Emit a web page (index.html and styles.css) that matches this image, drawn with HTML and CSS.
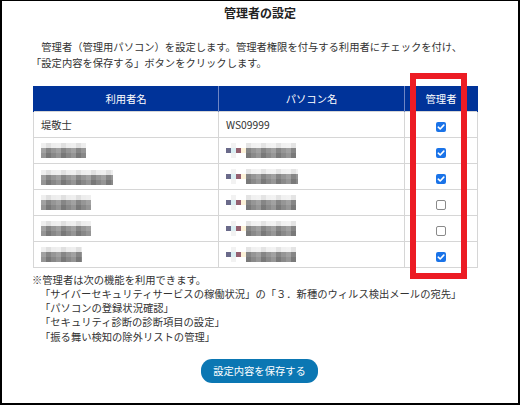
FILE: index.html
```html
<!DOCTYPE html>
<html lang="ja">
<head>
<meta charset="utf-8">
<link rel="stylesheet" href="styles.css">
</head>
<body>
<div class="frame">
  <h1 class="title">管理者の設定</h1>
  <p class="intro">　管理者（管理用パソコン）を設定します。管理者権限を付与する利用者にチェックを付け、<br>「設定内容を保存する」ボタンをクリックします。</p>
  <div class="table-wrap">
    <table class="users">
      <colgroup><col class="c1"><col class="c2"><col class="c3"></colgroup>
      <thead>
        <tr><th>利用者名</th><th>パソコン名</th><th>管理者</th></tr>
      </thead>
      <tbody>
        <tr><td>堤敬士</td><td>WS09999</td><td class="chk"><span class="cb on"><svg viewBox="0 0 10 10"><path d="M2.3 5.2 L4.2 7 L7.8 3.1" /></svg></span></td></tr>
        <tr><td><span class="mz n1"></span></td><td><span class="mz p1"></span></td><td class="chk"><span class="cb on"><svg viewBox="0 0 10 10"><path d="M2.3 5.2 L4.2 7 L7.8 3.1" /></svg></span></td></tr>
        <tr><td><span class="mz n2"></span></td><td><span class="mz p2"></span></td><td class="chk"><span class="cb on"><svg viewBox="0 0 10 10"><path d="M2.3 5.2 L4.2 7 L7.8 3.1" /></svg></span></td></tr>
        <tr><td><span class="mz n3"></span></td><td><span class="mz p3"></span></td><td class="chk"><span class="cb off"></span></td></tr>
        <tr><td><span class="mz n4"></span></td><td><span class="mz p4"></span></td><td class="chk"><span class="cb off"></span></td></tr>
        <tr><td><span class="mz n5"></span></td><td><span class="mz p5"></span></td><td class="chk"><span class="cb on"><svg viewBox="0 0 10 10"><path d="M2.3 5.2 L4.2 7 L7.8 3.1" /></svg></span></td></tr>
      </tbody>
    </table>
    <div class="highlight"></div>
  </div>
  <div class="notes">
    <div>※管理者は次の機能を利用できます。</div>
    <div class="ind">「サイバーセキュリティサービスの稼働状況」の「３．新種のウィルス検出メールの宛先」</div>
    <div class="ind">「パソコンの登録状況確認」</div>
    <div class="ind">「セキュリティ診断の診断項目の設定」</div>
    <div class="ind">「振る舞い検知の除外リストの管理」</div>
  </div>
  <div class="actions">
    <button class="save">設定内容を保存する</button>
  </div>
</div>
</body>
</html>
```
FILE: styles.css
```css
html, body {
  margin: 0;
  padding: 0;
  background: #fff;
}
body {
  font-family: "Noto Sans CJK JP", "Noto Sans", sans-serif;
  color: #333;
  font-size: 10.3px;
}
.frame {
  width: 520px;
  height: 405px;
  box-sizing: border-box;
  border-style: solid;
  border-color: #000;
  border-width: 1px 2px 2px 2px;
  display: flex;
  flex-direction: column;
}
.title {
  margin: 4px 0 0 0;
  font-size: 12px;
  line-height: 16px;
  font-weight: bold;
  text-align: center;
  color: #222;
}
.intro {
  margin: 18px 0 0 29px;
  line-height: 16px;
  font-size: 10.3px;
}
.table-wrap {
  position: relative;
  margin: 15px 0 0 31px;
  width: 444px;
}
.users {
  width: 444px;
  border-collapse: collapse;
  table-layout: fixed;
}
.c1 { width: 185px; }
.c2 { width: 186px; }
.c3 { width: 73px; }
.users th {
  background: #003399;
  color: #fff;
  font-weight: normal;
  font-size: 10.3px;
  height: 25px;
  padding: 0;
  border-left: 1px solid #6f86c4;
  border-right: 1px solid #6f86c4;
  box-sizing: border-box;
}
.users th:first-child { border-left-color: #003399; }
.users th:last-child { border-right-color: #003399; }
.users td {
  height: 26px;
  padding: 0 0 0 7px;
  border: 1px solid #d6d6d6;
  box-sizing: border-box;
  font-size: 10.3px;
  vertical-align: middle;
}
.users td.chk {
  padding: 2px 0 0 0;
  text-align: center;
}
.cb {
  display: inline-block;
  width: 10px;
  height: 10px;
  border-radius: 2px;
  box-sizing: border-box;
  vertical-align: middle;
}
.cb.on {
  background: #1a73e8;
}
.cb.on svg {
  display: block;
  width: 10px;
  height: 10px;
}
.cb.on path {
  fill: none;
  stroke: #fff;
  stroke-width: 1.6;
  stroke-linecap: round;
  stroke-linejoin: round;
}
.cb.off {
  border: 1px solid #8a8a8a;
  background: #fff;
}
.highlight {
  position: absolute;
  left: 377px;
  top: -13px;
  width: 57px;
  height: 206px;
  box-sizing: border-box;
  border: 6px solid #ec1c24;
}
.mz {
  display: inline-block;
  height: 15px;
  vertical-align: middle;
  background:
    repeating-linear-gradient(90deg, rgba(255,255,255,0.18) 0 5px, rgba(0,0,0,0.05) 5px 10px, rgba(255,255,255,0.08) 10px 15px),
    linear-gradient(180deg, #ececec 0 5px, #8d8d8d 5px 10px, #7e7e7e 10px 15px);
}
.n1 { width: 45px; }
.n2 { width: 72px; margin-top: 3px; }
.n3 { width: 50px; }
.n4 { width: 50px; }
.n5 { width: 41px; }
.p1, .p2, .p3, .p4, .p5 {
  background:
    linear-gradient(90deg, #6a6a8a 0 5px, #d9eef2 5px 10px, #946070 10px 15px, #fdf2d8 15px 20px, transparent 20px) 0 5px / 100% 5px no-repeat,
    repeating-linear-gradient(90deg, rgba(255,255,255,0.18) 0 5px, rgba(0,0,0,0.05) 5px 10px, rgba(255,255,255,0.08) 10px 15px),
    linear-gradient(90deg, #fff 0 20px, transparent 20px),
    linear-gradient(180deg, #f0f0f0 0 5px, #8d8d8d 5px 10px, #808080 10px 15px);
}
.p1 { width: 70px; }
.p2 { width: 72px; }
.p3 { width: 70px; }
.p4 { width: 70px; }
.p5 { width: 70px; }
.notes {
  margin: 5px 0 0 30px;
  line-height: 14.3px;
  font-size: 10.3px;
}
.notes .ind {
  padding-left: 8px;
}
.actions {
  display: flex;
  justify-content: center;
  margin-top: 15px;
  padding-right: 1px;
}
.save {
  width: 117px;
  height: 24px;
  border: none;
  border-radius: 11px;
  background: #0b77b3;
  color: #fff;
  font-family: "Noto Sans CJK JP", sans-serif;
  font-size: 10.3px;
  padding: 0;
}
```
